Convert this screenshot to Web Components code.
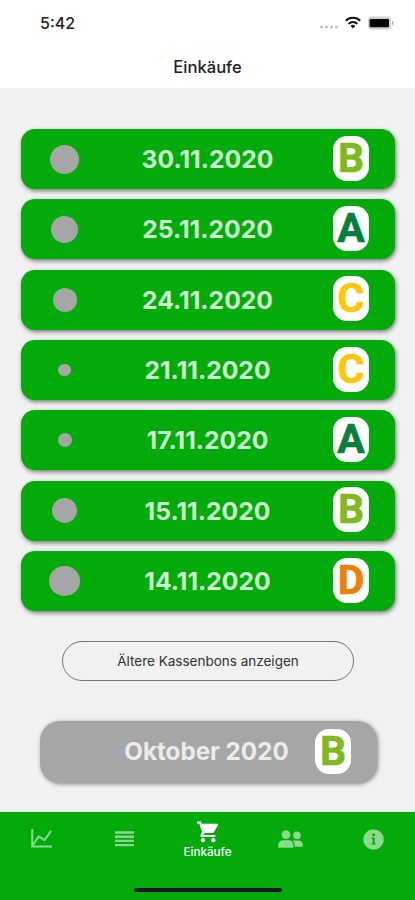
<!DOCTYPE html>
<html lang="de">
<head>
<meta charset="utf-8">
<title>Einkäufe</title>
<style>
	body {
		margin: 0;
		background: #f1f1f1;
		font-family: Inter, 'Liberation Sans', sans-serif;
	}
</style>
</head>
<body>
<shopping-app></shopping-app>

<script>
const GRADE_COLORS = { A: '#087e3d', B: '#80b91e', C: '#fec60a', D: '#ee7f0a' };

const RECEIPTS = [
	{ date: '30.11.2020', dot: 29, grade: 'B' },
	{ date: '25.11.2020', dot: 27, grade: 'A' },
	{ date: '24.11.2020', dot: 24, grade: 'C' },
	{ date: '21.11.2020', dot: 12.5, grade: 'C' },
	{ date: '17.11.2020', dot: 14, grade: 'A' },
	{ date: '15.11.2020', dot: 25, grade: 'B' },
	{ date: '14.11.2020', dot: 30.5, grade: 'D' },
];

const TAB_ICONS = {
	chart: `<svg width="22" height="20" viewBox="0 0 22 20" fill="none" stroke="currentColor" stroke-width="2">
		<path d="M1.2 0V17.4H21M2.1 15.7L7.8 7.3L13.5 11.2L20.1 1.9"/></svg>`,
	list: `<svg width="20" height="16" viewBox="0 0 20 16" fill="currentColor">
		<path d="M0 .3h19v2.4H0zM0 4.5h19v2.4H0zM0 8.7h19v2.4H0zM0 12.9h19v2.4H0z"/></svg>`,
	cart: `<svg width="22" height="22" viewBox="0 0 22 22" fill="currentColor">
		<path d="M0 .5h3.8l1.1 2.2H20.3c.7 0 1 .6.7 1.2l-4 7.2c-.4.7-.9 1-1.7 1H7.5l-1 1.9h11.8v2.1H5.2c-1.5 0-2.3-1.4-1.6-2.7l1.6-2.7L2.2 2.6H0z"/>
		<circle cx="6" cy="19.2" r="2.1"/><circle cx="16.3" cy="19.2" r="2.1"/></svg>`,
	people: `<svg width="25" height="18" viewBox="0 0 25 18" fill="currentColor">
		<circle cx="8" cy="4.6" r="4.4"/><circle cx="19" cy="5.4" r="3.8"/>
		<path d="M.3 17.7v-2.2c0-3.3 2.4-5.2 5.2-5.2h4.9c2.8 0 5 1.9 5 5.2v2.2zM16.6 16.7v-1.5c0-2-.7-3.6-1.8-4.8h5.6c2.6 0 4.5 1.7 4.5 4.4v1.1c0 .5-.3.8-.8.8z"/></svg>`,
	info: `<svg width="21" height="21" viewBox="0 0 21 21" fill="currentColor">
		<path fill-rule="evenodd" d="M10.5.2a10.3 10.3 0 1 0 0 20.6 10.3 10.3 0 0 0 0-20.6zM10.6 4.6a1.4 1.4 0 1 1 0 2.8 1.4 1.4 0 0 1 0-2.8zM8.7 8.6h2.9v5.6h1v1.3H8.5v-1.3h1.1V9.9h-.9z"/></svg>`,
};

class StatusBar extends HTMLElement {
	constructor() {
		super();
		this.attachShadow({ mode: 'open' });
	}

	connectedCallback() {
		this.shadowRoot.innerHTML = `
			<style>
				:host {
					display: flex;
					justify-content: space-between;
					align-items: center;
					height: 46px;
					padding: 0 20px 0 40px;
					box-sizing: border-box;
				}
				time { font-size: 16px; font-weight: 500; line-height: 20px; color: #222; }
				svg { display: block; }
			</style>
			<time>5:42</time>
			<svg width="76" height="16" viewBox="0 0 76 16">
				<g fill="#c4c4c4">
					<circle cx="2.5" cy="12" r="1.6"/><circle cx="7.5" cy="12" r="1.6"/>
					<circle cx="12.5" cy="12" r="1.6"/><circle cx="17.5" cy="12" r="1.6"/>
				</g>
				<g fill="none" stroke="#161616" stroke-width="2">
					<path d="M26.7 5.8a10.3 10.3 0 0 1 14.5 0"/>
					<path d="M29.5 8.9a6.3 6.3 0 0 1 8.9 0"/>
				</g>
				<path d="M31.6 10.9a3.5 3.5 0 0 1 4.7 0l-2.3 2.5z" fill="#161616"/>
				<rect x="49" y="1.6" width="23" height="13" rx="3.4" fill="#d2d2d2"/>
				<path d="M72.9 5.3c2.5.8 2.5 4.6 0 5.4z" fill="#bbb"/>
				<rect x="50.6" y="4" width="19.4" height="8.2" rx="1" fill="#050505"/>
			</svg>
		`;
	}
}

class GradeBadge extends HTMLElement {
	constructor() {
		super();
		this.attachShadow({ mode: 'open' });
	}

	connectedCallback() {
		const grade = this.getAttribute('grade');
		this.shadowRoot.innerHTML = `
			<style>
				:host {
					display: flex;
					justify-content: center;
					width: 36px;
					height: 45px;
					margin-bottom: 2px;
					box-sizing: border-box;
					border-radius: 14px;
					background: #fff;
					font: 700 41px/44px Roboto, 'Liberation Sans', sans-serif;
					-webkit-text-stroke: 0.7px currentColor;
					color: ${GRADE_COLORS[grade]};
				}
			</style>
			<span>${grade}</span>
		`;
	}
}

class ReceiptCard extends HTMLElement {
	constructor() {
		super();
		this.attachShadow({ mode: 'open' });
	}

	connectedCallback() {
		const dot = this.getAttribute('dot');
		this.shadowRoot.innerHTML = `
			<style>
				:host {
					display: grid;
					grid-template-columns: 87px 1fr 88px;
					align-items: center;
					justify-items: center;
					height: 60px;
					border-radius: 14px;
					background: #02ab0a;
					box-shadow: 1px 2px 4px rgba(0,0,0,0.5);
					color: #ccf1ce;
				}
				:host([month]) {
					height: 62px;
					grid-template-columns: 84px 1fr 88px;
					margin: 40px 18px 0 19px;
					border-radius: 20px;
					background: #a6a6a6;
					box-shadow: 1px 1px 4px rgba(0,0,0,0.45);
					color: #ececec;
				}
				.dot {
					width: ${dot}px;
					height: ${dot}px;
					border-radius: 50%;
					background: #a6a6a6;
				}
				.label {
					font-size: 24.7px;
					font-weight: 700;
					line-height: 30px;
					white-space: nowrap;
				}
				:host([month]) .label { font-size: 24.2px; }
				:host([month]) grade-badge { margin-bottom: 1px; }
			</style>
			<div class="dot"></div>
			<div class="label"><slot></slot></div>
			<grade-badge grade="${this.getAttribute('grade')}"></grade-badge>
		`;
	}
}

class OlderButton extends HTMLElement {
	constructor() {
		super();
		this.attachShadow({ mode: 'open' });
		this.shadowRoot.innerHTML = `
			<style>
				:host { display: block; margin: 30px 41px 0; }
				button {
					display: block;
					width: 292px;
					height: 40px;
					padding: 0;
					border: 1px solid #777;
					border-radius: 20px;
					background: none;
					font: 400 13.5px/18px Inter, sans-serif;
					color: #333;
				}
			</style>
			<button><slot></slot></button>
		`;
	}
}

class TabItem extends HTMLElement {
	constructor() {
		super();
		this.attachShadow({ mode: 'open' });
	}

	connectedCallback() {
		this.shadowRoot.innerHTML = `
			<style>
				:host {
					display: flex;
					flex-direction: column;
					align-items: center;
					justify-content: center;
					height: 54px;
					color: #8ad98d;
				}
				:host([active]) {
					height: 50px;
					justify-content: flex-start;
					padding-top: 9px;
					box-sizing: border-box;
					color: #fff;
				}
				svg { display: block; }
				.label { font-size: 11.7px; font-weight: 500; line-height: 18px; }
			</style>
			${TAB_ICONS[this.getAttribute('icon')]}
			<div class="label"><slot></slot></div>
		`;
	}
}

class TabBar extends HTMLElement {
	constructor() {
		super();
		this.attachShadow({ mode: 'open' });
		this.shadowRoot.innerHTML = `
			<style>
				:host {
					display: flex;
					flex-direction: column;
					justify-content: space-between;
					align-items: center;
					height: 88px;
					background: #02ab0a;
				}
				nav { display: grid; grid-template-columns: repeat(5, 1fr); width: 100%; }
				.home { width: 148px; height: 4px; margin-bottom: 8px; border-radius: 2px; background: #1d1420; }
			</style>
			<nav><slot></slot></nav>
			<div class="home"></div>
		`;
	}
}

class ShoppingApp extends HTMLElement {
	constructor() {
		super();
		this.attachShadow({ mode: 'open' });
	}

	connectedCallback() {
		this.render();
	}

	render() {
		const cards = RECEIPTS.map(
			(r) => `<receipt-card dot="${r.dot}" grade="${r.grade}">${r.date}</receipt-card>`
		).join('');

		this.shadowRoot.innerHTML = `
			<style>
				:host { display: flex; flex-direction: column; height: 900px; overflow: hidden; }
				header { height: 88px; background: #fff; }
				h1 {
					margin: 0;
					font-size: 16.6px;
					font-weight: 500;
					line-height: 42px;
					text-align: center;
					color: #222;
				}
				main { flex: 1; padding: 41px 20px 0 21px; }
				.list { display: flex; flex-direction: column; gap: 10.35px; }
			</style>
			<header>
				<status-bar></status-bar>
				<h1>Einkäufe</h1>
			</header>
			<main>
				<div class="list">${cards}</div>
				<older-button>Ältere Kassenbons anzeigen</older-button>
				<receipt-card month dot="0" grade="B">Oktober 2020</receipt-card>
			</main>
			<tab-bar>
				<tab-item icon="chart"></tab-item>
				<tab-item icon="list"></tab-item>
				<tab-item icon="cart" active>Einkäufe</tab-item>
				<tab-item icon="people"></tab-item>
				<tab-item icon="info"></tab-item>
			</tab-bar>
		`;
	}
}

customElements.define('status-bar', StatusBar);
customElements.define('grade-badge', GradeBadge);
customElements.define('receipt-card', ReceiptCard);
customElements.define('older-button', OlderButton);
customElements.define('tab-item', TabItem);
customElements.define('tab-bar', TabBar);
customElements.define('shopping-app', ShoppingApp);
</script>
</body>
</html>
